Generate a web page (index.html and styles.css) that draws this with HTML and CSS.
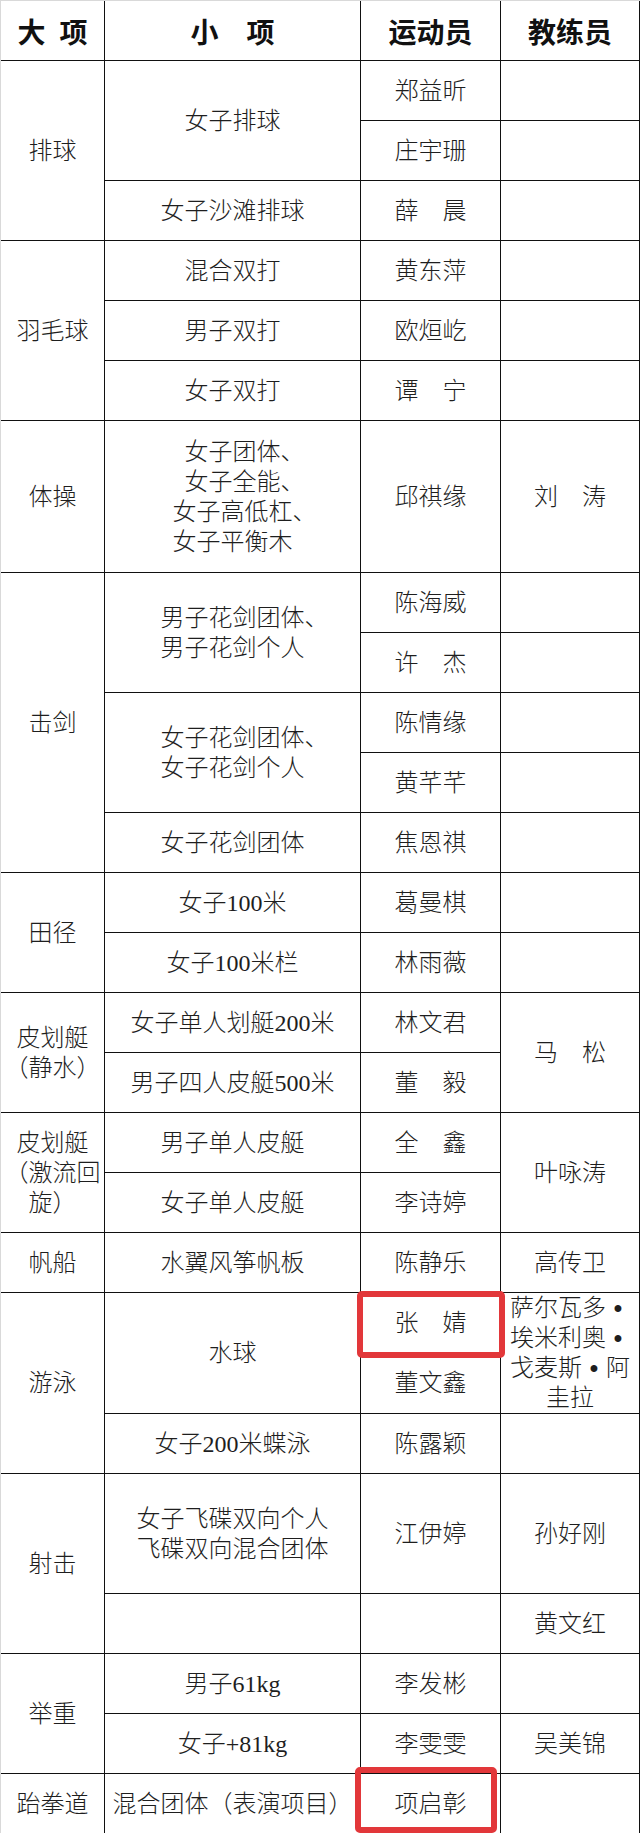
FILE: index.html
```html
<!DOCTYPE html>
<html lang="zh-CN">
<head>
<meta charset="utf-8">
<title>名单</title>
<link rel="stylesheet" href="styles.css">
</head>
<body>
<div class="page">
<table class="roster">
<colgroup><col class="c1"><col class="c2"><col class="c3"><col class="c4"></colgroup>
<thead>
<tr class="head"><th>大<span class="hsp"></span>项</th><th>小　项</th><th>运动员</th><th>教练员</th></tr>
</thead>
<tbody>
<tr><td rowspan="3">排球</td><td rowspan="2">女子排球</td><td>郑益昕</td><td></td></tr>
<tr><td>庄宇珊</td><td></td></tr>
<tr><td>女子沙滩排球</td><td>薛　晨</td><td></td></tr>

<tr><td rowspan="3">羽毛球</td><td>混合双打</td><td>黄东萍</td><td></td></tr>
<tr><td>男子双打</td><td>欧烜屹</td><td></td></tr>
<tr><td>女子双打</td><td>谭　宁</td><td></td></tr>

<tr class="tall"><td>体操</td><td>女子团体<span class="hang">、</span><br>女子全能<span class="hang">、</span><br>女子高低杠<span class="hang">、</span><br>女子平衡木</td><td>邱祺缘</td><td>刘　涛</td></tr>

<tr><td rowspan="5">击剑</td><td rowspan="2">男子花剑团体<span class="hang">、</span><br>男子花剑个人</td><td>陈海威</td><td></td></tr>
<tr><td>许　杰</td><td></td></tr>
<tr><td rowspan="2">女子花剑团体<span class="hang">、</span><br>女子花剑个人</td><td>陈情缘</td><td></td></tr>
<tr><td>黄芊芊</td><td></td></tr>
<tr><td>女子花剑团体</td><td>焦恩祺</td><td></td></tr>

<tr><td rowspan="2">田径</td><td>女子100米</td><td>葛曼棋</td><td></td></tr>
<tr><td>女子100米栏</td><td>林雨薇</td><td></td></tr>

<tr><td rowspan="2">皮划艇<br>（静水）</td><td>女子单人划艇200米</td><td>林文君</td><td rowspan="2">马　松</td></tr>
<tr><td>男子四人皮艇500米</td><td>董　毅</td></tr>

<tr><td rowspan="2">皮划艇<br>（激流回<br>旋）</td><td>男子单人皮艇</td><td>全　鑫</td><td rowspan="2">叶咏涛</td></tr>
<tr><td>女子单人皮艇</td><td>李诗婷</td></tr>

<tr><td>帆船</td><td>水翼风筝帆板</td><td>陈静乐</td><td>高传卫</td></tr>

<tr><td rowspan="3">游泳</td><td rowspan="2">水球</td><td>张　婧</td><td rowspan="2">萨尔瓦多<span class="dot">•</span><br>埃米利奥<span class="dot">•</span><br>戈麦斯<span class="dot">•</span>阿<br>圭拉</td></tr>
<tr><td>董文鑫</td></tr>
<tr><td>女子200米蝶泳</td><td>陈露颖</td><td></td></tr>

<tr class="double"><td rowspan="2">射击</td><td>女子飞碟双向个人<br>飞碟双向混合团体</td><td>江伊婷</td><td>孙好刚</td></tr>
<tr><td></td><td></td><td>黄文红</td></tr>

<tr><td rowspan="2">举重</td><td>男子61kg</td><td>李发彬</td><td></td></tr>
<tr><td>女子+81kg</td><td>李雯雯</td><td>吴美锦</td></tr>

<tr class="last"><td>跆拳道</td><td>混合团体（表演项目）</td><td>项启彰</td><td></td></tr>
</tbody>
</table>
<div class="mark mark-one"></div>
<div class="mark mark-two"></div>
</div>
</body>
</html>
```
FILE: styles.css
```css
* { box-sizing: border-box; }
html, body { margin: 0; padding: 0; background: #fff; }
.page { position: relative; width: 640px; }
.roster {
  width: 640px;
  table-layout: fixed;
  border-collapse: separate;
  border-spacing: 0;
  border-top: 1px solid #d9d9d9;
  border-left: 1px solid #d9d9d9;
  font-family: "Liberation Serif", "Noto Sans CJK SC", sans-serif;
  font-size: 24px;
  font-weight: 300;
  line-height: 30px;
  color: #1e1e1e;
}
.c1 { width: 104px; }
.c2 { width: 256px; }
.c3 { width: 140px; }
.c4 { width: 139px; }
.roster tr { height: 60px; }
.roster tr.tall { height: 152px; }
.roster tr.double { height: 120px; }
.roster th, .roster td {
  padding: 0;
  text-align: center;
  vertical-align: middle;
  white-space: nowrap;
  border-right: 1px solid #111;
  border-bottom: 1px solid #111;
}
.roster th {
  font-family: "Noto Sans CJK SC", sans-serif;
  font-size: 28px;
  font-weight: 700;
  color: #111;
}
.roster tr.last td { border-bottom-color: #d4d4d4; }
.hsp { display: inline-block; width: 0.5em; }
.hang { margin-right: -1em; }
.dot {
  display: inline-block;
  width: 1em;
  text-align: center;
  font-family: "Liberation Sans", sans-serif;
  font-weight: 700;
}
.mark {
  position: absolute;
  border: 6px solid #e2373a;
  border-radius: 5px;
}
.mark-one { left: 357px; top: 1291px; width: 148px; height: 67px; }
.mark-two { left: 355px; top: 1767px; width: 142px; height: 66px; }
```
